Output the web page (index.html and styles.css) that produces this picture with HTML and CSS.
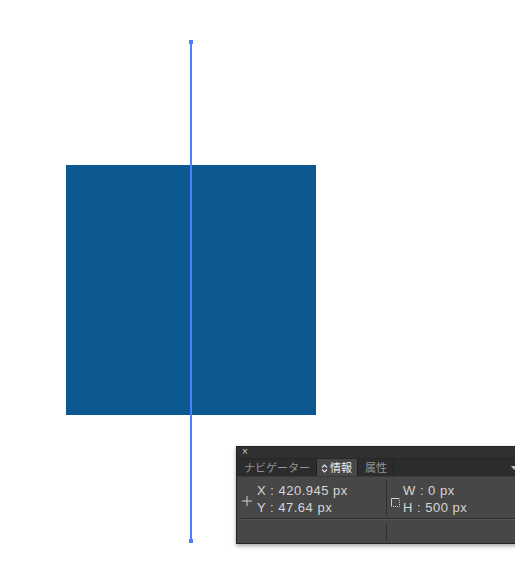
FILE: index.html
```html
<!DOCTYPE html>
<html lang="ja">
<head>
    <meta charset="UTF-8">
    <title>info panel</title>
    <link rel="stylesheet" href="styles.css">
</head>
<body>
    <div class="canvas">
        <div class="square"></div>
        <div class="guide">
            <span class="handle top"></span>
            <span class="handle bottom"></span>
        </div>

        <div class="panel">
            <div class="panel-title"><span class="close">×</span></div>
            <div class="tabs">
                <span class="tab">ナビゲーター</span>
                <span class="tab active">
                    <svg class="updown" width="7" height="9" viewBox="0 0 7 9">
                        <path d="M1 3.5L3.5 1L6 3.5M1 5.5L3.5 8L6 5.5" fill="none" stroke="#e8e8e8" stroke-width="1.1"/>
                    </svg>情報</span>
                <span class="tab">属性</span>
                <span class="menu-arrow"></span>
            </div>
            <div class="info-row">
                <div class="info-cell first">
                    <span class="cell-icon">
                        <svg width="10" height="10" viewBox="0 0 10 10">
                            <path d="M5 0V10M0 5H10" stroke="#cfcfcf" stroke-width="1"/>
                        </svg>
                    </span>
                    <div class="values">
                        <div>X : 420.945 px</div>
                        <div>Y : 47.64 px</div>
                    </div>
                </div>
                <div class="info-cell">
                    <span class="cell-icon small">
                        <svg width="9" height="9" viewBox="0 0 9 9">
                            <path d="M0.5 8.5V0.5H8.5" fill="none" stroke="#cfcfcf" stroke-width="1"/>
                            <path d="M8.5 2V8.5H2" fill="none" stroke="#cfcfcf" stroke-width="1" stroke-dasharray="1 1"/>
                        </svg>
                    </span>
                    <div class="values">
                        <div>W : 0 px</div>
                        <div>H : 500 px</div>
                    </div>
                </div>
            </div>
            <div class="info-row empty">
                <div class="info-cell first"></div>
                <div class="info-cell"></div>
            </div>
        </div>
    </div>
</body>
</html>
```

FILE: styles.css
```css
body {
    margin: 0;
    padding: 0;
    background-color: #fff;
    font-family: "Liberation Sans", Arial, "Noto Sans CJK JP", sans-serif;
}

.canvas {
    position: relative;
    width: 515px;
    height: 564px;
    overflow: hidden;
}

/* 図形 */
.square {
    position: absolute;
    left: 66px;
    top: 165px;
    width: 250px;
    height: 250px;
    background-color: #0c5891;
}

.guide {
    position: absolute;
    left: 190px;
    top: 42px;
    width: 2px;
    height: 499px;
    background-color: #4c7ffc;
}

.handle {
    position: absolute;
    left: -1px;
    width: 4px;
    height: 4px;
    background-color: #4c7ffc;
}

.handle.top {
    top: -2px;
}

.handle.bottom {
    bottom: -2px;
}

/* 情報パネル */
.panel {
    position: absolute;
    left: 236px;
    top: 446px;
    width: 290px;
    background-color: #474747;
    border: 1px solid #222;
    border-right: none;
    box-shadow: 0 2px 4px rgba(0, 0, 0, 0.35);
}

.panel-title {
    height: 11px;
    background-color: #303030;
    border-bottom: 1px solid #262626;
}

.close {
    display: block;
    margin-left: 5px;
    font-size: 10px;
    line-height: 10px;
    color: #c8c8c8;
}

.tabs {
    display: flex;
    align-items: stretch;
    height: 17px;
    background-color: #2c2c2c;
    border-bottom: 1px solid #3a3a3a;
    font-family: "Noto Sans CJK JP", sans-serif;
    font-size: 11px;
    line-height: 17px;
}

.tab {
    padding: 0 6px 0 7px;
    color: #969696;
    border-right: 1px solid #222;
}

.tab.active {
    background-color: #474747;
    color: #f0f0f0;
    padding: 0 5px 0 4px;
}

.updown {
    margin-right: 2px;
    vertical-align: -1px;
}

.menu-arrow {
    margin-left: auto;
    margin-right: 10px;
    margin-top: 7px;
    width: 0;
    height: 0;
    border-left: 3px solid transparent;
    border-right: 3px solid transparent;
    border-top: 4px solid #bbb;
}

.info-row {
    display: flex;
    margin: 0 4px;
    height: 41px;
    border-bottom: 1px solid #2e2e2e;
    box-shadow: 0 1px 0 #555;
}

.info-row.empty {
    height: 24px;
    border-bottom: none;
    box-shadow: none;
}

.info-cell {
    display: flex;
    align-items: center;
    padding-top: 2px;
}

.info-cell.first {
    width: 145px;
    border-right: 1px solid #2e2e2e;
    margin: 3px 0 3px 0;
}

.info-row.empty .info-cell.first {
    margin: 5px 0 3px 0;
}

.cell-icon {
    width: 11px;
    margin-left: 1px;
    margin-right: 4px;
    padding-top: 4px;
    line-height: 0;
}

.cell-icon.small {
    margin-left: 4px;
    margin-right: 2px;
    width: 10px;
    padding-top: 7px;
}

.values {
    font-size: 13px;
    letter-spacing: 0.5px;
    line-height: 17px;
    color: #d6d6d6;
}
```
